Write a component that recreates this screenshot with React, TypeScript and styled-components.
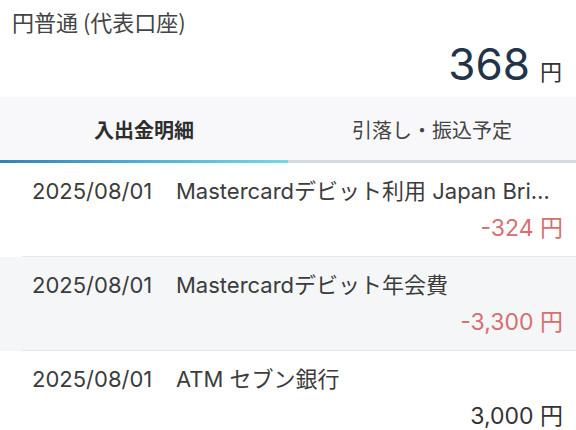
import React from "react";
import styled, { createGlobalStyle } from "styled-components";

const GlobalStyle = createGlobalStyle`
  html, body {
    margin: 0;
    padding: 0;
    background: #ffffff;
  }
  body {
    font-family: Inter, "Noto Sans CJK JP", sans-serif;
    color: #3a3a3a;
  }
  * {
    box-sizing: border-box;
  }
`;

type Transaction = {
  date: string;
  description: string;
  amount: string;
  negative: boolean;
};

const transactions: Transaction[] = [
  { date: "2025/08/01", description: "Mastercardデビット利用 Japan Bridge Store", amount: "-324", negative: true },
  { date: "2025/08/01", description: "Mastercardデビット年会費", amount: "-3,300", negative: true },
  { date: "2025/08/01", description: "ATM セブン銀行", amount: "3,000", negative: false },
];

const Screen = styled.div`
  width: 576px;
  height: 430px;
  overflow: hidden;
  background: #ffffff;
`;

const Header = styled.div`
  display: flex;
  flex-direction: column;
  padding: 6px 14px 9px 12px;
`;

const AccountName = styled.div`
  font-size: 22px;
  line-height: 30px;
  color: #444;
  font-family: "Noto Sans CJK JP", sans-serif;
`;

const BalanceRow = styled.div`
  display: flex;
  justify-content: flex-end;
  align-items: baseline;
  margin-top: 4px;
`;

const BalanceValue = styled.span`
  font-size: 44px;
  line-height: 48px;
  color: #22334a;
`;

const BalanceUnit = styled.span`
  font-size: 22px;
  margin-left: 10px;
  color: #333;
`;

const Tabs = styled.div`
  display: grid;
  grid-template-columns: 1fr 1fr;
  background: #f8f8fa;
`;

const Tab = styled.div`
  display: flex;
  flex-direction: column;
  align-items: center;
`;

const TabLabel = styled.div<{ $active?: boolean }>`
  padding: 22px 0 17px;
  font-size: 20px;
  line-height: 24px;
  font-weight: ${(p) => (p.$active ? "bold" : "normal")};
  color: ${(p) => (p.$active ? "#2e2e2e" : "#444")};
`;

const Indicator = styled.div<{ $active?: boolean }>`
  align-self: stretch;
  height: 3px;
  background: ${(p) =>
    p.$active ? "linear-gradient(90deg, #2f84b4 0%, #4fb0d4 50%, #72d8e8 100%)" : "#d6dbe1"};
`;

const List = styled.div`
  display: flex;
  flex-direction: column;
`;

const Row = styled.div<{ $shaded?: boolean }>`
  background: ${(p) => (p.$shaded ? "#f4f6f8" : "#ffffff")};
`;

const RowInner = styled.div`
  margin-left: 22px;
  padding: 13px 13px 13px 10px;
  border-bottom: 1px solid #e6e8eb;
  display: flex;
  flex-direction: column;
  gap: 7px;
`;

const Line = styled.div`
  display: flex;
  font-size: 22px;
  line-height: 30px;
  color: #3c3c3c;
  min-width: 0;
`;

const DateText = styled.span`
  flex: none;
  width: 144px;
`;

const Description = styled.span`
  flex: 1;
  min-width: 0;
  white-space: nowrap;
  overflow: hidden;
  text-overflow: ellipsis;
`;

const Amount = styled.div<{ $negative?: boolean }>`
  text-align: right;
  font-size: 23px;
  line-height: 30px;
  color: ${(p) => (p.$negative ? "#d66f6d" : "#333")};
`;

export default function App() {
  return (
    <Screen>
      <GlobalStyle />
      <Header>
        <AccountName>円普通 (代表口座)</AccountName>
        <BalanceRow>
          <BalanceValue>368</BalanceValue>
          <BalanceUnit>円</BalanceUnit>
        </BalanceRow>
      </Header>

      <Tabs>
        <Tab>
          <TabLabel $active>入出金明細</TabLabel>
          <Indicator $active />
        </Tab>
        <Tab>
          <TabLabel>引落し・振込予定</TabLabel>
          <Indicator />
        </Tab>
      </Tabs>

      <List>
        {transactions.map((t, i) => (
          <Row key={i} $shaded={i % 2 === 1}>
            <RowInner>
              <Line>
                <DateText>{t.date}</DateText>
                <Description>{t.description}</Description>
              </Line>
              <Amount $negative={t.negative}>{t.amount} 円</Amount>
            </RowInner>
          </Row>
        ))}
      </List>
    </Screen>
  );
}
